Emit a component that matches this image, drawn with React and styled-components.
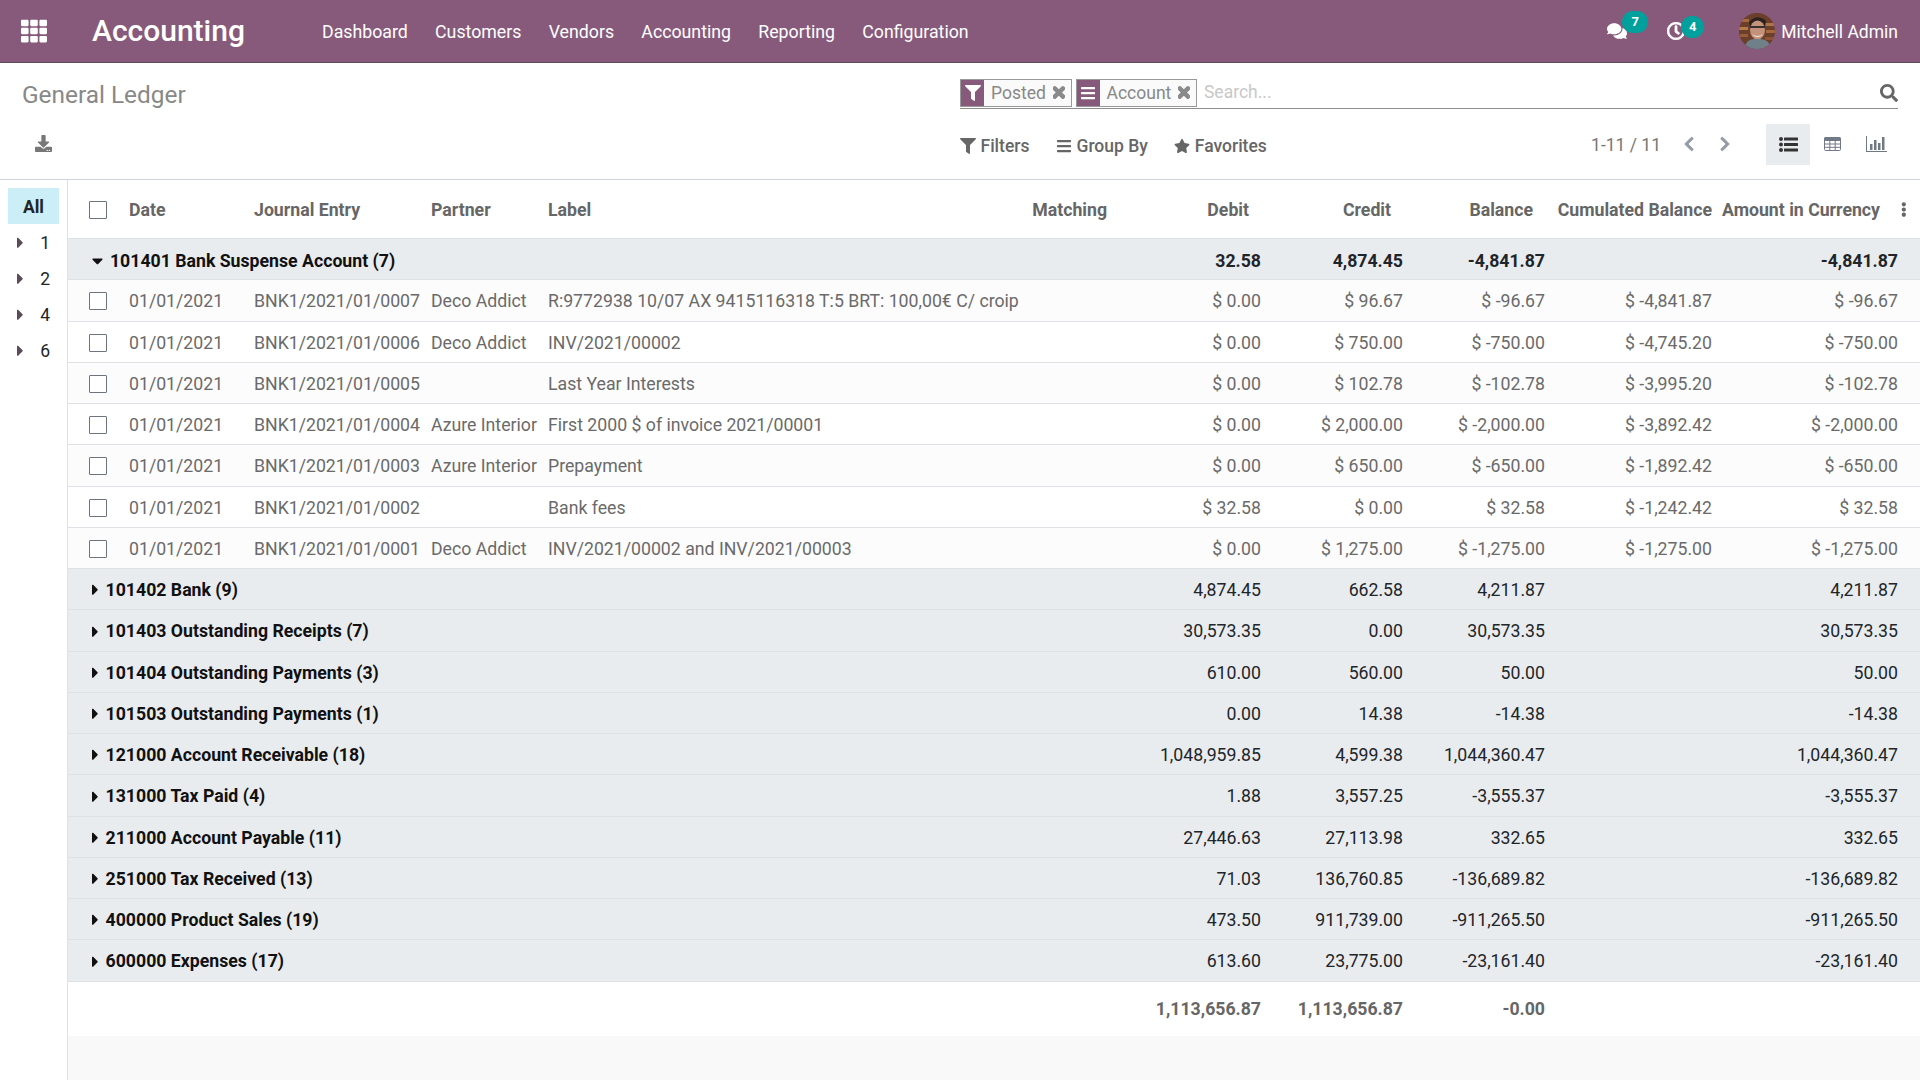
import React from 'react';
import styled, { createGlobalStyle, css } from 'styled-components';
import {
  FaTh, FaComments, FaRegClock, FaFilter, FaBars, FaStar, FaTimes, FaSearch,
  FaChevronLeft, FaChevronRight, FaCaretRight, FaCaretDown, FaEllipsisV, FaDownload,
} from 'react-icons/fa';

const COLUMNS = '52px 125px 177px 117px 577px 154px 142px 142px 167px 199px';
const fitIcon = ratio => css`svg { width: ${ratio}em; height: 1em; display: block; }`;

const Global = createGlobalStyle`
  html, body { margin: 0; padding: 0; height: 100%; overflow: hidden; background: #fff; }
  body { font-family: Roboto, "Liberation Sans", sans-serif; font-size: 17.5px; color: #666; }
  * { box-sizing: border-box; }
`;

const Page = styled.div`display: flex; flex-direction: column; height: 100vh;`;

const NavBar = styled.header`
  flex: 0 0 63px; display: flex; align-items: center; background: #875a7b; color: #fff;
  border-bottom: 1px solid #5f4a5c;
`;
const Apps = styled.span`display: flex; margin-left: 21px; font-size: 26px; width: 71px;`;
const Brand = styled.span`font-size: 30px; font-weight: 500; width: 230px; position: relative; top: -1px;`;
const Menu = styled.nav`display: flex; gap: 27.2px; flex: 1; padding-top: 1px;`;
const MenuItem = styled.span`font-size: 17.75px;`;
const Systray = styled.div`display: flex; align-items: center; padding-right: 22px;`;
const TrayIcon = styled.span`
  position: relative; display: flex; font-size: ${p => p.$size}px; margin-right: ${p => p.$gap}px;
  svg { stroke: currentColor; stroke-width: ${p => p.$stroke ?? 0}; }
`;
const Badge = styled.span`
  position: absolute; left: ${p => p.$left}px; top: ${p => p.$top}px; min-width: ${p => p.$w}px; height: 22px;
  border-radius: 11px; background: #00a09d; color: #fff; font-size: 13px; font-weight: 700;
  display: flex; align-items: center; justify-content: center; padding-bottom: 2px;
`;
const AvatarSvg = styled.svg`width: 36px; height: 36px; margin-right: 6px; display: block;`;
const UserName = styled.span`font-size: 17.5px; padding-top: 1px;`;

const ControlPanel = styled.section`
  flex: 0 0 117px; display: grid; grid-template-columns: 960px 938px; grid-template-rows: 33px 70px;
  padding-top: 13px; border-bottom: 1px solid #ced4da;
`;
const Title = styled.div`font-size: 24.4px; color: #888; padding: 3px 0 0 22px; line-height: 31px;`;
const SearchBar = styled.div`
  display: flex; align-items: center; border-bottom: 1px solid #8f8f8f; padding-top: 1px; height: 33px;
`;
const Facet = styled.div`
  display: flex; align-items: center; height: 28px; border: 1px solid #999; background: #fafafa; color: #888;
  margin-right: 4px; padding-right: 6px;
`;
const FacetIcon = styled.span`
  width: 23px; align-self: stretch; background: #875a7b; color: #fff; display: flex; align-items: center;
  justify-content: center; font-size: 16px; margin-right: 7px;
`;
const FacetClose = styled.span`
  ${fitIcon(0.6875)} display: flex; font-size: 17px; margin-left: 7px; color: #8a8a8a;
  svg { stroke: currentColor; stroke-width: 40; }
`;
const Placeholder = styled.span`color: #c8c8c8; margin-left: 3px; flex: 1; padding-bottom: 2px;`;
const SearchIcon = styled.span`display: flex; color: #666; font-size: 18px;`;

const DownloadCell = styled.div`display: flex; align-items: center; padding: 0 0 2px 35px; color: #777; font-size: 17px;`;
const ToolRow = styled.div`display: flex; align-items: center; justify-content: space-between;`;
const Filters = styled.div`display: flex; gap: 26.5px; padding-top: 4px;`;
const FilterBtn = styled.span`display: flex; align-items: center; gap: 4.5px; font-weight: 500; color: #666;`;
const FilterGlyph = styled.span`display: flex; font-size: 16px;`;
const PagerBox = styled.div`display: flex; align-items: center;`;
const PagerText = styled.span`color: #777; margin-right: 23px; padding-top: 1px;`;
const Chevron = styled.span`
  ${fitIcon(0.625)} display: flex; font-size: 16px; color: #929aa4; margin-right: ${p => p.$gap}px;
  svg { stroke: currentColor; stroke-width: 24; }
`;
const ViewBtn = styled.span`
  width: 44px; height: 41px; display: flex; align-items: center; justify-content: center;
  background: ${p => (p.$active ? '#e9ecef' : 'transparent')}; color: ${p => (p.$active ? '#333' : '#727986')};
`;
const ViewSvg = styled.svg`display: block; width: ${p => p.$w}px; height: ${p => p.$h}px;`;

const Content = styled.main`flex: 1; display: flex; min-height: 0;`;
const Sidebar = styled.aside`flex: 0 0 68px; border-right: 1px solid #dee2e6; padding: 8px 8px 0;`;
const SideAll = styled.div`
  height: 36px; background: #cceef6; color: #212529; font-weight: 700; display: flex; align-items: center;
  justify-content: center; padding-top: 1px;
`;
const SideItem = styled.div`
  height: 36px; display: flex; align-items: center; justify-content: space-between; color: #212529;
  padding: 2px 9px 0; font-size: 17.5px;
`;
const SideCaret = styled.span`${fitIcon(0.375)} display: flex; color: #5a4a5a; font-size: 17.5px;`;

const TableArea = styled.div`flex: 1; display: flex; flex-direction: column; background: #f9f9f9; min-width: 0; font-size: 17.7px;`;
const Row = styled.div`display: grid; grid-template-columns: ${COLUMNS}; align-items: center; background: #fff;`;
const HeadRow = styled(Row)`height: 59px; border-bottom: 1px solid #dee2e6; padding-top: 1px; position: relative; font-weight: 700; color: #666;`;
const BodyRow = styled(Row)`height: 41.25px; border-bottom: 1px solid #dee2e6; padding-top: 2px; background: ${p => (p.$odd ? '#fcfcfc' : '#fff')}; color: #6a6a6a;`;
const GroupRow = styled(Row)`
  height: 41.25px; border-bottom: 1px solid #dee2e6; padding-top: ${p => (p.$open ? 3 : 2)}px; background: #e9ecef; color: #212529;
  font-weight: ${p => (p.$open ? 700 : 400)};
`;
const FootRow = styled(Row)`height: 54.75px; font-weight: 700; color: #666; padding-top: 1px;`;
const Cell = styled.div`
  display: flex; justify-content: ${p => (p.$right ? 'flex-end' : 'flex-start')};
  padding: 0 ${p => p.$pr ?? 9}px 0 9px; white-space: nowrap; min-width: 0;
`;
const LabelHead = styled.div`display: flex; justify-content: space-between; padding: 0 9px;`;
const FootSpacer = styled.div`grid-column: span 5;`;
const CheckCell = styled.div`display: flex; justify-content: flex-end; padding-right: 13px;`;
const Check = styled.span`display: block; width: 18px; height: 18px; border: 1.25px solid #6c757d; border-radius: 1px; background: #fff;`;
const GroupName = styled.div`
  grid-column: span 5; display: flex; align-items: center; gap: 7px; padding-left: 24px; font-weight: 700; color: #111;
  white-space: nowrap;
`;
const GroupCaret = styled.span`${p => fitIcon(p.$open ? 0.625 : 0.375)} display: flex; font-size: 17.5px; color: #111;`;
const Kebab = styled.span`${fitIcon(0.375)} position: absolute; right: 13px; top: 22px; display: flex; font-size: 15px; color: #666;`;

function Avatar() {
  return (
    <AvatarSvg viewBox="0 0 36 36">
      <defs><clipPath id="av"><circle cx="18" cy="18" r="18" /></clipPath></defs>
      <g clipPath="url(#av)">
        <rect width="36" height="36" fill="#6b3f2a" />
        <rect x="0" y="6" width="10" height="3" fill="#a8683f" />
        <rect x="0" y="14" width="9" height="3" fill="#b87a4a" />
        <rect x="1" y="21" width="8" height="3" fill="#9a5c38" />
        <rect x="26" y="10" width="10" height="3" fill="#b0744a" />
        <rect x="27" y="17" width="9" height="3" fill="#a8683f" />
        <rect x="26" y="24" width="10" height="3" fill="#8c5434" />
        <path d="M10 9 Q18 0 27 8 L26 14 L11 14 Z" fill="#2b211d" />
        <ellipse cx="18.5" cy="17" rx="7.5" ry="9.5" fill="#c4927a" />
        <rect x="11" y="13" width="15" height="2" fill="#3a3030" />
        <path d="M13 21 Q18.5 25 24 21 Q22 24 18.5 24 Q15 24 13 21Z" fill="#f3e6dc" />
        <path d="M5 36 Q7 26 15 26 L22 26 Q31 27 32 36 Z" fill="#6f8088" />
      </g>
    </AvatarSvg>
  );
}

function ListIcon() {
  return (
    <ViewSvg $w={19} $h={15} viewBox="0 0 19 15" fill="currentColor">
      <circle cx="2" cy="2" r="2" /><circle cx="2" cy="7.5" r="2" /><circle cx="2" cy="13" r="2" />
      <rect x="5" y="0.5" width="14" height="3" rx="0.5" /><rect x="5" y="6" width="14" height="3" rx="0.5" /><rect x="5" y="11.5" width="14" height="3" rx="0.5" />
    </ViewSvg>
  );
}

function TableIcon() {
  return (
    <ViewSvg $w={17} $h={14} viewBox="0 0 17 14" fill="none" stroke="currentColor" strokeWidth="1">
      <rect x="0.5" y="0.5" width="16" height="13" rx="1.2" />
      <rect x="0.5" y="0.5" width="16" height="3" rx="1" fill="currentColor" />
      <path d="M0.5 7h16M0.5 10.3h16M5.8 3.5v10M11.2 3.5v10" />
    </ViewSvg>
  );
}

function ChartIcon() {
  return (
    <ViewSvg $w={21} $h={16} viewBox="0 0 21 16" fill="currentColor">
      <rect x="0" y="0" width="1" height="16" /><rect x="0" y="15" width="21" height="1" />
      <rect x="4" y="8" width="2.5" height="6" /><rect x="8" y="4" width="2.5" height="10" />
      <rect x="12" y="7" width="2.5" height="7" /><rect x="16" y="1" width="2.5" height="13" />
    </ViewSvg>
  );
}

const lines = [
  ['BNK1/2021/01/0007', 'Deco Addict', 'R:9772938 10/07 AX 9415116318 T:5 BRT: 100,00€ C/ croip', '$ 0.00', '$ 96.67', '$ -96.67', '$ -4,841.87', '$ -96.67'],
  ['BNK1/2021/01/0006', 'Deco Addict', 'INV/2021/00002', '$ 0.00', '$ 750.00', '$ -750.00', '$ -4,745.20', '$ -750.00'],
  ['BNK1/2021/01/0005', '', 'Last Year Interests', '$ 0.00', '$ 102.78', '$ -102.78', '$ -3,995.20', '$ -102.78'],
  ['BNK1/2021/01/0004', 'Azure Interior', 'First 2000 $ of invoice 2021/00001', '$ 0.00', '$ 2,000.00', '$ -2,000.00', '$ -3,892.42', '$ -2,000.00'],
  ['BNK1/2021/01/0003', 'Azure Interior', 'Prepayment', '$ 0.00', '$ 650.00', '$ -650.00', '$ -1,892.42', '$ -650.00'],
  ['BNK1/2021/01/0002', '', 'Bank fees', '$ 32.58', '$ 0.00', '$ 32.58', '$ -1,242.42', '$ 32.58'],
  ['BNK1/2021/01/0001', 'Deco Addict', 'INV/2021/00002 and INV/2021/00003', '$ 0.00', '$ 1,275.00', '$ -1,275.00', '$ -1,275.00', '$ -1,275.00'],
];

const groups = [
  ['101402 Bank (9)', '4,874.45', '662.58', '4,211.87'],
  ['101403 Outstanding Receipts (7)', '30,573.35', '0.00', '30,573.35'],
  ['101404 Outstanding Payments (3)', '610.00', '560.00', '50.00'],
  ['101503 Outstanding Payments (1)', '0.00', '14.38', '-14.38'],
  ['121000 Account Receivable (18)', '1,048,959.85', '4,599.38', '1,044,360.47'],
  ['131000 Tax Paid (4)', '1.88', '3,557.25', '-3,555.37'],
  ['211000 Account Payable (11)', '27,446.63', '27,113.98', '332.65'],
  ['251000 Tax Received (13)', '71.03', '136,760.85', '-136,689.82'],
  ['400000 Product Sales (19)', '473.50', '911,739.00', '-911,265.50'],
  ['600000 Expenses (17)', '613.60', '23,775.00', '-23,161.40'],
];

function Group({ name, debit, credit, balance, open }) {
  return (
    <GroupRow $open={open}>
      <GroupName>
        <GroupCaret $open={open}>{open ? <FaCaretDown /> : <FaCaretRight />}</GroupCaret>
        {name}
      </GroupName>
      <Cell $right>{debit}</Cell>
      <Cell $right>{credit}</Cell>
      <Cell $right>{balance}</Cell>
      <Cell />
      <Cell $right $pr={22}>{balance}</Cell>
    </GroupRow>
  );
}

export default function App() {
  return (
    <Page>
      <Global />
      <NavBar>
        <Apps><FaTh /></Apps>
        <Brand>Accounting</Brand>
        <Menu>
          {['Dashboard', 'Customers', 'Vendors', 'Accounting', 'Reporting', 'Configuration'].map(m => (
            <MenuItem key={m}>{m}</MenuItem>
          ))}
        </Menu>
        <Systray>
          <TrayIcon $size={20} $gap={40}><FaComments /><Badge $left={15} $top={-10} $w={26}>7</Badge></TrayIcon>
          <TrayIcon $size={18} $gap={54} $stroke={24}><FaRegClock /><Badge $left={14} $top={-6} $w={23}>4</Badge></TrayIcon>
          <Avatar />
          <UserName>Mitchell Admin</UserName>
        </Systray>
      </NavBar>

      <ControlPanel>
        <Title>General Ledger</Title>
        <SearchBar>
          <Facet><FacetIcon><FaFilter /></FacetIcon>Posted<FacetClose><FaTimes /></FacetClose></Facet>
          <Facet><FacetIcon><FaBars /></FacetIcon>Account<FacetClose><FaTimes /></FacetClose></Facet>
          <Placeholder>Search...</Placeholder>
          <SearchIcon><FaSearch /></SearchIcon>
        </SearchBar>
        <DownloadCell><FaDownload /></DownloadCell>
        <ToolRow>
          <Filters>
            <FilterBtn><FilterGlyph><FaFilter /></FilterGlyph>Filters</FilterBtn>
            <FilterBtn><FilterGlyph><FaBars /></FilterGlyph>Group By</FilterBtn>
            <FilterBtn><FilterGlyph><FaStar /></FilterGlyph>Favorites</FilterBtn>
          </Filters>
          <PagerBox>
            <PagerText>1-11 / 11</PagerText>
            <Chevron $gap={26}><FaChevronLeft /></Chevron>
            <Chevron $gap={36}><FaChevronRight /></Chevron>
            <ViewBtn $active><ListIcon /></ViewBtn>
            <ViewBtn><TableIcon /></ViewBtn>
            <ViewBtn><ChartIcon /></ViewBtn>
          </PagerBox>
        </ToolRow>
      </ControlPanel>

      <Content>
        <Sidebar>
          <SideAll>All</SideAll>
          {['1', '2', '4', '6'].map(n => (
            <SideItem key={n}><SideCaret><FaCaretRight /></SideCaret>{n}</SideItem>
          ))}
        </Sidebar>
        <TableArea>
          <HeadRow>
            <CheckCell><Check /></CheckCell>
            <Cell>Date</Cell>
            <Cell>Journal Entry</Cell>
            <Cell>Partner</Cell>
            <LabelHead><span>Label</span><span>Matching</span></LabelHead>
            <Cell $right $pr={21}>Debit</Cell>
            <Cell $right $pr={21}>Credit</Cell>
            <Cell $right $pr={21}>Balance</Cell>
            <Cell $right>Cumulated Balance</Cell>
            <Cell $right $pr={40}>Amount in Currency</Cell>
            <Kebab><FaEllipsisV /></Kebab>
          </HeadRow>
          <Group open name="101401 Bank Suspense Account (7)" debit="32.58" credit="4,874.45" balance="-4,841.87" />
          {lines.map((l, i) => (
            <BodyRow key={l[0]} $odd={i % 2 === 0}>
              <CheckCell><Check /></CheckCell>
              <Cell>01/01/2021</Cell>
              <Cell>{l[0]}</Cell>
              <Cell>{l[1]}</Cell>
              <Cell>{l[2]}</Cell>
              <Cell $right>{l[3]}</Cell>
              <Cell $right>{l[4]}</Cell>
              <Cell $right>{l[5]}</Cell>
              <Cell $right>{l[6]}</Cell>
              <Cell $right $pr={22}>{l[7]}</Cell>
            </BodyRow>
          ))}
          {groups.map(g => (
            <Group key={g[0]} name={g[0]} debit={g[1]} credit={g[2]} balance={g[3]} />
          ))}
          <FootRow>
            <FootSpacer />
            <Cell $right>1,113,656.87</Cell>
            <Cell $right>1,113,656.87</Cell>
            <Cell $right>-0.00</Cell>
          </FootRow>
        </TableArea>
      </Content>
    </Page>
  );
}
